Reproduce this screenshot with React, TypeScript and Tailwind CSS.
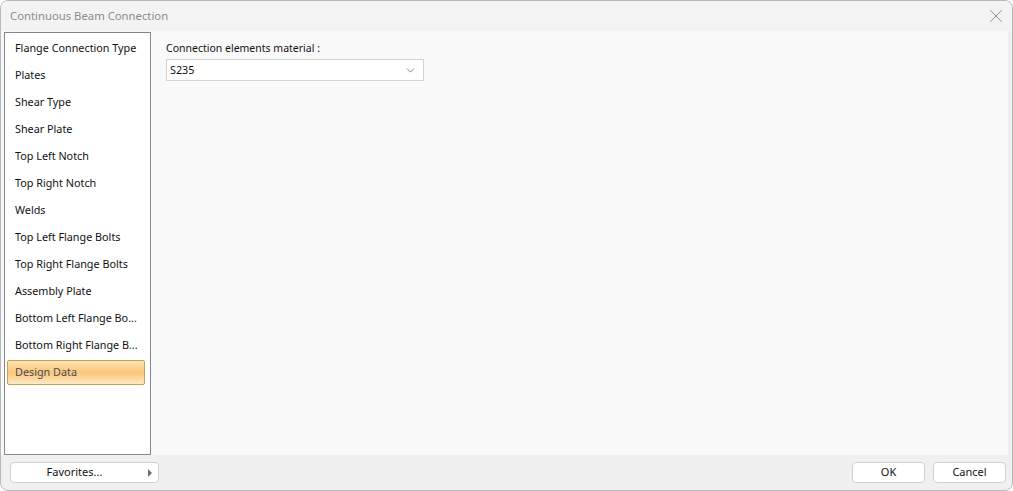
import { ChevronDown, X } from 'lucide-react';

const pages = [
  'Flange Connection Type',
  'Plates',
  'Shear Type',
  'Shear Plate',
  'Top Left Notch',
  'Top Right Notch',
  'Welds',
  'Top Left Flange Bolts',
  'Top Right Flange Bolts',
  'Assembly Plate',
  'Bottom Left Flange Bo...',
  'Bottom Right Flange B...',
  'Design Data',
];

const font = { fontFamily: '"Segoe UI", "Noto Sans", "Open Sans", sans-serif' };

export default function App() {
  const selected = 'Design Data';

  return (
    <div className="w-[1013px] h-[491px] bg-white" style={font}>
      <div className="w-full h-full flex flex-col rounded-lg border border-[#b9b9b9] bg-[#f0f0f0] overflow-hidden">
        {/* title bar */}
        <div className="h-[30px] shrink-0 flex items-center justify-between pl-[9px] pr-[5px] bg-[#f3f3f3]">
          <span className="text-[11.3px] text-[#8c8c8c]">Continuous Beam Connection</span>
          <X className="w-[22px] h-[22px] text-[#7a7a7a]" strokeWidth={0.9} />
        </div>

        {/* body */}
        <div className="flex-1 flex bg-[#f9f9f9] mr-[4px] min-h-0">
          <div className="w-[147px] ml-[3px] mt-px shrink-0 bg-white border border-[#828790] flex flex-col pt-[2px] pl-px pr-[4px]">
            {pages.map((p) =>
              p === selected ? (
                <div
                  key={p}
                  className="h-[25px] mx-px my-px flex items-center pl-[7px] text-[10.8px] text-[#4a4a5a] border border-[#c4a15a] rounded-[2px] bg-gradient-to-b from-[#fde3b4] via-[#fbc676] to-[#fde9c4]"
                >
                  {p}
                </div>
              ) : (
                <div key={p} className="h-[27px] flex items-center pl-[9px] text-[10.8px] text-[#111111] whitespace-nowrap">
                  {p}
                </div>
              ),
            )}
          </div>

          <div className="flex-1 pl-[15px] pt-[9px]">
            <div className="text-[10.5px] text-[#111111] leading-[16px]">Connection elements material :</div>
            <div className="mt-[3px] w-[258px] h-[22px] bg-white border border-[#d4d4d4] flex items-center justify-between pl-[3px] pr-[6px]">
              <span className="text-[10.8px] text-[#111111]">S235</span>
              <ChevronDown className="w-[13px] h-[13px] text-[#5e5e5e]" strokeWidth={1.4} />
            </div>
          </div>
        </div>

        {/* footer */}
        <div className="h-[35px] shrink-0 flex items-center justify-between pl-[9px] pr-[6px]">
          <button className="w-[149px] h-[21px] bg-white border border-[#d0d0d0] rounded-[4px] flex items-center text-[11px] text-[#111111] relative">
            <span className="flex-1 text-center pr-[20px]">Favorites...</span>
            <span className="absolute right-[6px] top-[6px] w-0 h-0 border-y-[4px] border-y-transparent border-l-[4px] border-l-[#6f6f6f]" />
          </button>
          <div className="flex gap-[8px]">
            <button className="w-[73px] h-[21px] bg-white border border-[#d0d0d0] rounded-[4px] text-[11px] text-[#111111]">OK</button>
            <button className="w-[73px] h-[21px] bg-white border border-[#d0d0d0] rounded-[4px] text-[11px] text-[#111111]">Cancel</button>
          </div>
        </div>
      </div>
    </div>
  );
}
